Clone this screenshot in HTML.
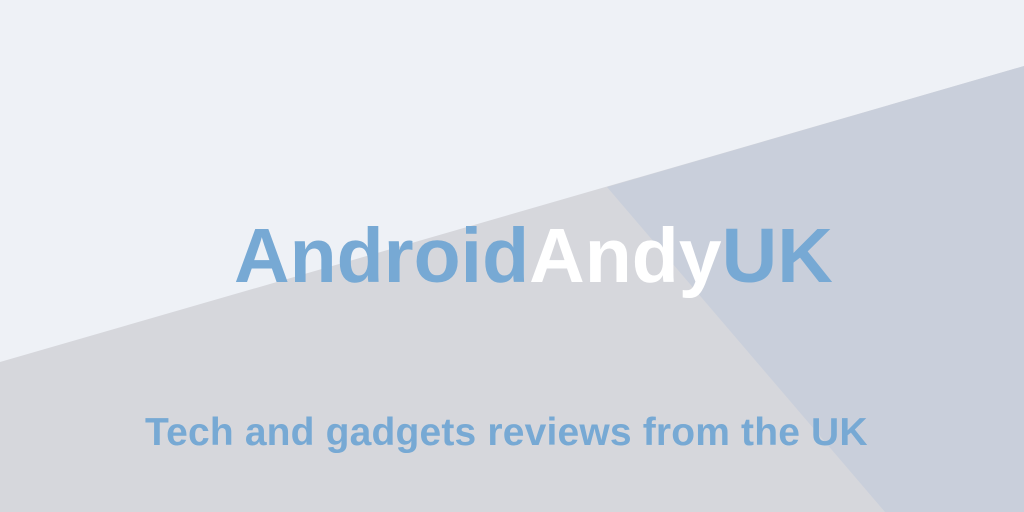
<!DOCTYPE html>
<html><head><meta charset="utf-8"><style>
html,body{margin:0;padding:0;width:1024px;height:512px;overflow:hidden;background:#eef1f6}
svg{position:absolute;left:0;top:0}
.t{position:absolute;left:0;width:1024px;font-family:"Liberation Sans",sans-serif;font-weight:bold;white-space:nowrap}
</style></head><body>
<svg width="1024" height="512">
<polygon points="0,362 1024,66 1024,512 0,512" fill="#d6d7dc"/>
<polygon points="607,187 1024,66 1024,512 885,512" fill="#c9cfdb"/>
</svg>
<div class="t" style="left:234px;top:211px;font-size:77px;line-height:90px;color:#77a9d4">Android<span style="color:#fff">Andy</span>UK</div>
<div class="t" style="left:145px;top:410px;font-size:39px;line-height:46px;letter-spacing:0.17px;color:#77a9d4">Tech and gadgets reviews from the UK</div>
</body></html>
